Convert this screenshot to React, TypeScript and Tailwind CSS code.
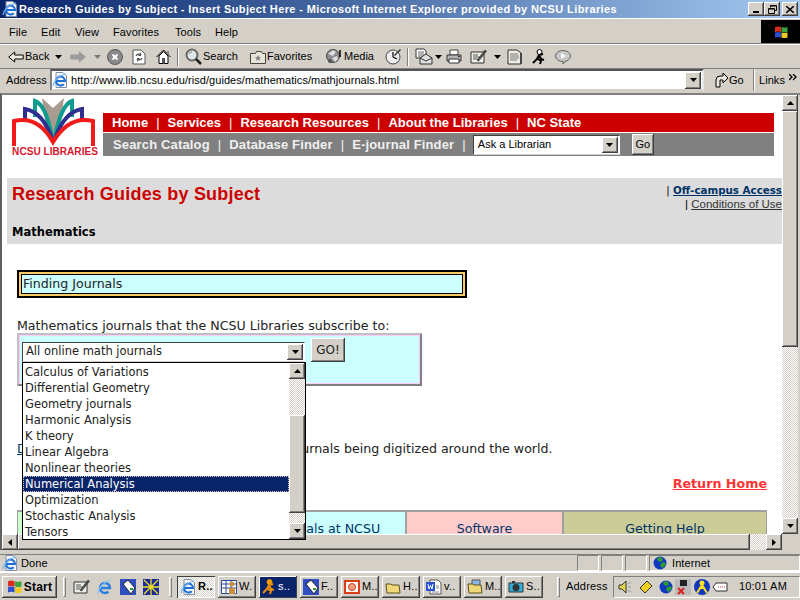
import type { ReactNode } from 'react';

const raised = 'bg-[#d4d0c8] shadow-[inset_-1px_-1px_0_#404040,inset_1px_1px_0_#ffffff,inset_-2px_-2px_0_#808080]';
const dither = 'bg-[repeating-conic-gradient(#d4d0c8_0_25%,#ffffff_0_50%)] bg-[length:2px_2px]';

function Arrow({ dir }: { dir: 'up' | 'down' | 'left' | 'right' }) {
  const pts = { up: '0,4 7,4 3.5,0', down: '0,0 7,0 3.5,4', left: '4,0 4,7 0,3.5', right: '0,0 0,7 4,3.5' }[dir];
  const vertical = dir === 'up' || dir === 'down';
  return (
    <svg width={vertical ? 7 : 4} height={vertical ? 4 : 7}>
      <polygon points={pts} fill="#000" />
    </svg>
  );
}

function ScrollBtn({ dir, className = '' }: { dir: 'up' | 'down' | 'left' | 'right'; className?: string }) {
  return (
    <div className={`${raised} flex shrink-0 items-center justify-center ${className}`}>
      <Arrow dir={dir} />
    </div>
  );
}

function Ico({ w = 16, h = 16, children }: { w?: number; h?: number; children: ReactNode }) {
  return (
    <svg width={w} height={h} viewBox={`0 0 ${w} ${h}`} className="shrink-0">
      {children}
    </svg>
  );
}

function IeIcon() {
  return (
    <Ico>
      <path d="M4 .5h7l3.500 3.500v11.500H4z" fill="#f4f4f4" stroke="#8090a8" />
      <path d="M4 9h9a4.500 4.500 0 1 0-1.300 3.200" fill="none" stroke="#1c6fd6" strokeWidth="2" />
      <path d="M1 14C2 8 8 3 14 2" fill="none" stroke="#70b4f0" strokeWidth="1.200" />
    </Ico>
  );
}

function BlueE() {
  return (
    <Ico>
      <path d="M3 9h10a5 5 0 1 0-1.500 3.600" fill="none" stroke="#2a7ee0" strokeWidth="2.500" />
      <path d="M1 15C1 9 7 3 14 1" fill="none" stroke="#8cc4f4" strokeWidth="1.200" />
    </Ico>
  );
}

function Globe() {
  return (
    <Ico w={14} h={14}>
      <circle cx="7" cy="7" r="6.500" fill="#1238c0" />
      <path d="M4 2l4-1 2 3-2 2-3-1zM7 8l4-2 2 2-3 4-2-1z" fill="#2f9c2f" />
    </Ico>
  );
}

function BackArrow({ gray = false, flip = false }: { gray?: boolean; flip?: boolean }) {
  return (
    <svg width="16" height="12" viewBox="0 0 16 12" className={flip ? '-scale-x-100' : ''}>
      <path d="M.7 6l6-5v3h8.500v4H6.700v3z" fill={gray ? '#9a9a9a' : '#e8e8e0'} stroke={gray ? '#9a9a9a' : '#000'} />
    </svg>
  );
}

function StopIcon() {
  return (
    <Ico>
      <circle cx="8" cy="8" r="7.500" fill="#8a8a8a" stroke="#5a5a5a" />
      <path d="M5.500 5.500l5 5M10.500 5.500l-5 5" stroke="#fff" strokeWidth="2" />
    </Ico>
  );
}

function RefreshIcon() {
  return (
    <Ico w={14}>
      <path d="M1 1h8l4 4v10H1z" fill="#fff" stroke="#555" />
      <path d="M4 7a3 3 0 0 1 5-1M10 9a3 3 0 0 1-5 1" fill="none" stroke="#555" strokeWidth="1.300" />
      <path d="M9 3v4H6zM5 13V9h3z" fill="#555" />
    </Ico>
  );
}

function HomeIcon() {
  return (
    <Ico w={15} h={15}>
      <path d="M3 7l4.500-4.500L12 7v7.500H3z" fill="#fff" stroke="#000" />
      <path d="M.5 8L7.500 1l7 7" fill="none" stroke="#000" />
      <path d="M6 9h3v5.500H6z" fill="#555" />
      <path d="M11 2h2v3h-2z" fill="#888" />
    </Ico>
  );
}

function SearchIcon() {
  return (
    <Ico w={17} h={17}>
      <circle cx="7" cy="7" r="5.500" fill="#dfe6e6" stroke="#666" strokeWidth="2" />
      <path d="M11 11l5 5" stroke="#222" strokeWidth="2.500" />
      <path d="M4 6a3 3 0 0 1 3-2" stroke="#888" fill="none" />
    </Ico>
  );
}

function FavoritesIcon() {
  return (
    <Ico h={14}>
      <path d="M.5 3.500h5l1-2h5l1 2h3v10H.5z" fill="#e8e4d8" stroke="#444" />
      <path d="M8 5l1 2 2 .3-1.500 1.500.4 2L8 9.800 6.100 10.800l.4-2L5 7.300 7 7z" fill="#888" />
    </Ico>
  );
}

function MediaIcon() {
  return (
    <Ico w={17} h={17}>
      <circle cx="7" cy="8" r="6.500" fill="#8c8c8c" stroke="#444" />
      <path d="M2 6l5-4 3 2-3 4zM6 10l5-2 1 3-3 3z" fill="#ddd" />
      <circle cx="4" cy="13" r="2" fill="#555" />
      <path d="M14 2v7" stroke="#000" strokeWidth="1.500" />
    </Ico>
  );
}

function HistoryIcon() {
  return (
    <Ico w={17} h={17}>
      <circle cx="8" cy="9" r="7" fill="#eee" stroke="#444" />
      <path d="M8 9V4M8 9l4 2" stroke="#000" strokeWidth="1.200" />
      <path d="M9 7l6-6 1 1-6 6z" fill="#333" />
    </Ico>
  );
}

function MailIcon() {
  return (
    <Ico w={18} h={17}>
      <path d="M1 1h8l2 2v7H1z" fill="#fff" stroke="#333" />
      <path d="M3 4h6M3 6h6M3 8h5" stroke="#666" />
      <path d="M5 10l6-4 6 4v6H5z" fill="#e0e0e0" stroke="#333" />
      <path d="M5 10l6 3 6-3" fill="none" stroke="#333" />
    </Ico>
  );
}

function PrintIcon() {
  return (
    <Ico h={15}>
      <path d="M4 1h8v5H4z" fill="#fff" stroke="#444" />
      <path d="M1 6h14v6H1z" fill="#b5b5b5" stroke="#333" />
      <path d="M3 10h10v4H3z" fill="#fff" stroke="#333" />
      <path d="M12 7h2v1h-2z" fill="#333" />
    </Ico>
  );
}

function EditIcon() {
  return (
    <Ico w={17} h={15}>
      <path d="M1 3h13v11H1z" fill="#efefe8" stroke="#333" />
      <path d="M3 6h5M3 8h6M3 10h4" stroke="#555" />
      <path d="M7 11l8-10 1.500 1.200-8 10z" fill="#555" stroke="#222" strokeWidth=".6" />
    </Ico>
  );
}

function DiscussIcon() {
  return (
    <Ico w={15}>
      <path d="M1 1h9l4 3v11H1z" fill="#ecebe4" stroke="#333" />
      <path d="M3 5h8M3 7h9M3 9h9M3 11h7" stroke="#777" />
      <path d="M14 4v11" stroke="#333" strokeWidth="1.500" />
    </Ico>
  );
}

function RunnerIcon({ color = '#fff', stroke = '#000' }: { color?: string; stroke?: string }) {
  return (
    <Ico w={14}>
      <circle cx="7.500" cy="3" r="2.500" fill={color} stroke={stroke} />
      <path d="M7 6l2 4 3 1M7 6l-2 4-4 4M6 10l3 2-1 3M7 6l4-1" fill="none" stroke={stroke} strokeWidth="2" />
    </Ico>
  );
}

function MessengerIcon() {
  return (
    <Ico h={14}>
      <ellipse cx="8" cy="6" rx="7.500" ry="5.500" fill="#c8c8c8" stroke="#666" />
      <path d="M6 3l5 3-5 3z" fill="#fff" />
      <path d="M8 11v3l3-3" fill="#c8c8c8" stroke="#666" />
    </Ico>
  );
}

function GoIcon() {
  return (
    <Ico w={15}>
      <path d="M2 15V8a4 4 0 0 1 4-4h3V1l5 5-5 5V8H6v7z" fill="#e8e8e0" stroke="#000" />
    </Ico>
  );
}

function WinFlag({ size = 14 }: { size?: number }) {
  return (
    <svg width={size} height={size} viewBox="0 0 14 14" className="shrink-0">
      <path d="M1 2q3-1 6 0v5q-3-1-6 0z" fill="#d62b1f" />
      <path d="M7.500 2q3 1 6 0v5q-3 1-6 0z" fill="#3ba33b" />
      <path d="M1 7.500q3-1 6 0v5q-3-1-6 0z" fill="#2a4fd0" />
      <path d="M7.500 7.500q3 1 6 0v5q-3 1-6 0z" fill="#f0c81e" />
    </svg>
  );
}

function TagIcon() {
  return (
    <Ico>
      <path d="M0 0h16v16H0z" fill="#1238c0" opacity=".85" />
      <path d="M3 5l5-4 7 8-4 6z" fill="#fff" stroke="#222" />
      <path d="M10 9h3v2h-3z" fill="#2f9c2f" />
    </Ico>
  );
}

function StarGridIcon() {
  return (
    <Ico>
      <path d="M0 0h16v16H0z" fill="#1a2a9a" />
      <path d="M1 1l14 14M15 1L1 15M8 0v16M0 8h16" stroke="#f0e020" strokeWidth="1.300" />
    </Ico>
  );
}

function SheetPersonIcon() {
  return (
    <Ico>
      <path d="M.5 1.500h15v13H.5z" fill="#fff" stroke="#2a4a9a" />
      <path d="M.5 5h15M.5 9h15M5 1.500v13M10 1.500v13" stroke="#2a4a9a" />
      <circle cx="11" cy="5" r="2.500" fill="#c89040" />
      <path d="M8 15V9h6v6z" fill="#c89040" />
    </Ico>
  );
}

function SlideIcon() {
  return (
    <Ico>
      <path d="M0 1h16v14H0z" fill="#d8401a" />
      <path d="M2 3h12v10H2z" fill="#fff" />
      <circle cx="8" cy="8" r="3.500" fill="#f0a080" stroke="#d8401a" />
    </Ico>
  );
}

function FolderIcon({ paper = false }: { paper?: boolean }) {
  return (
    <Ico>
      {paper && <path d="M5 1h8v8H5z" fill="#8cb8e8" stroke="#555" />}
      <path d="M1 5h5l1 1h7l1 8H2z" fill="#f0d878" stroke="#5a5020" />
    </Ico>
  );
}

function WordIcon() {
  return (
    <Ico>
      <path d="M4 1h8l3 3v11H4z" fill="#fff" stroke="#555" />
      <path d="M0 3h9v9H0z" fill="#2a4fd0" />
      <path d="M2 5l1 5 1.500-3.500L6 10l1-5" fill="none" stroke="#fff" />
      <path d="M10 7h3M10 9h3M6 13h7" stroke="#888" />
    </Ico>
  );
}

function CameraIcon() {
  return (
    <Ico>
      <path d="M1 4h14v9H1z" fill="#30b0d8" stroke="#333" />
      <circle cx="8" cy="8.500" r="3.500" fill="#333" />
      <path d="M4 2h3v2H4z" fill="#333" />
    </Ico>
  );
}

function Logo() {
  return (
    <div className="flex w-[86px] shrink-0 flex-col items-center">
      <svg width="86" height="49" viewBox="0 0 86 49">
        <path d="M30 1L41 11 52 1 48 30 41 45 34 30z" fill="#a89c90" />
        <path d="M23 20V4Q34 8 40 40" fill="none" stroke="#0f9b8e" strokeWidth="4" />
        <path d="M60 20V4Q49 8 43 40" fill="none" stroke="#0f9b8e" strokeWidth="4" />
        <path d="M13 24V12Q31 15 40 42" fill="none" stroke="#2f2f8f" strokeWidth="4" />
        <path d="M70 24V12Q52 15 43 42" fill="none" stroke="#2f2f8f" strokeWidth="4" />
        <path d="M2 49V24Q26 18 41 45Q57 18 81 24V49" fill="none" stroke="#f01c1c" strokeWidth="4" />
      </svg>
      <div className="mt-[1px] text-[10.100px] leading-[10px] font-bold whitespace-nowrap text-[#d8172c]">NCSU LIBRARIES</div>
    </div>
  );
}

const menus = [
  ['File', 'w-[32px]'],
  ['Edit', 'w-[34px]'],
  ['View', 'w-[38px]'],
  ['Favorites', 'w-[62px]'],
  ['Tools', 'w-[40px]'],
  ['Help', 'w-[40px]'],
];

const listItems = ['Calculus of Variations', 'Differential Geometry', 'Geometry journals', 'Harmonic Analysis', 'K theory', 'Linear Algebra', 'Nonlinear theories', 'Numerical Analysis', 'Optimization', 'Stochastic Analysis', 'Tensors'];

function NavSep() {
  return <span className="px-[8px] font-normal">|</span>;
}

function Dropdown() {
  return (
    <div className="absolute top-[267px] left-[20px] z-10 flex h-[178px] w-[284px] border border-black bg-white font-['DejaVu_Sans',sans-serif]">
      <div className="flex-1 pt-[1px]">
        {listItems.map((item) => (
          <div
            key={item}
            className={`h-[16px] pl-[2px] text-[11.500px] leading-[16px] whitespace-nowrap ${item === 'Numerical Analysis' ? 'bg-[#0a246a] text-white outline-1 -outline-offset-1 outline-[#d4d0c8] outline-dotted' : 'text-[#222222]'}`}
          >
            {item}
          </div>
        ))}
      </div>
      <div className="flex w-[16px] flex-col">
        <ScrollBtn dir="up" className="h-[16px]" />
        <div className={`h-[36px] ${dither}`} />
        <div className={`h-[98px] ${raised}`} />
        <div className={`flex-1 ${dither}`} />
        <ScrollBtn dir="down" className="h-[16px]" />
      </div>
    </div>
  );
}

function PageBody() {
  return (
    <div className="h-[439px] overflow-hidden bg-white font-['DejaVu_Sans',sans-serif]">
      <div className="flex pt-[2px] pl-[10px] font-['Liberation_Sans',sans-serif]">
        <Logo />
        <div className="mt-[16px] ml-[5px] w-[671px]">
          <div className="flex h-[19px] items-center bg-[#cc0000] pt-[1px] pl-[9px] text-[13px] font-bold whitespace-nowrap text-white">
            Home<NavSep />Services<NavSep />Research Resources<NavSep />About the Libraries<NavSep />NC State
          </div>
          <div className="mt-[1px] flex h-[23px] items-center bg-[#808080] pl-[10px] text-[13px] font-bold tracking-[0.15px] whitespace-nowrap text-[#f0f0f0]">
            <span className="pt-[1px]">Search Catalog</span><NavSep /><span className="pt-[1px]">Database Finder</span><NavSep /><span className="pt-[1px]">E-journal Finder</span><NavSep />
            <div className="ml-[-1px] flex h-[20px] w-[147px] items-center justify-between border border-t-[#404040] border-r-white border-b-[#d4d0c8] border-l-[#404040] bg-white pr-[1px] pl-[4px] text-[11px] font-normal tracking-normal text-black">
              Ask a Librarian
              <ScrollBtn dir="down" className="h-[16px] w-[16px]" />
            </div>
            <div className={`ml-[12px] flex h-[21px] w-[22px] items-center justify-center text-[11px] font-normal tracking-normal text-black ${raised}`}>Go</div>
          </div>
        </div>
      </div>

      <div className="mt-[21px] ml-[5px] flex h-[66px] justify-between bg-[#dcdcdc]">
        <div className="pt-[5px] pl-[5px] font-['Liberation_Sans',sans-serif]">
          <div className="text-[18px] leading-[22px] font-bold tracking-[0.2px] text-[#cc0000]">Research Guides by Subject</div>
          <div className="mt-[19px] font-['DejaVu_Sans',sans-serif] text-[11.500px] leading-[16px] font-bold text-black">Mathematics</div>
        </div>
        <div className="pt-[5px] text-right leading-[14px] whitespace-nowrap text-[#333333]">
          <div className="text-[10.300px]">
            <span className="text-black">| </span>
            <span className="font-bold text-[#003366] underline">Off-campus Access</span>
          </div>
          <div className="font-['Liberation_Sans',sans-serif] text-[11.500px]">
            <span className="text-black">| </span>
            <span className="underline">Conditions of Use</span>
          </div>
        </div>
      </div>

      <div className="mt-[26px] ml-[15px] w-[450px] border-2 border-black">
        <div className="border-2 border-[#ffcc66]">
          <div className="h-[20px] border border-black bg-[#ccffff] pl-[1px] text-[12.600px] leading-[18px] text-[#222222]">Finding Journals</div>
        </div>
      </div>

      <div className="mt-[20px] ml-[15px] text-[12.600px] leading-[16px] whitespace-nowrap text-[#222222]">Mathematics journals that the NCSU Libraries subscribe to:</div>

      <div className="mt-[-1px] ml-[15px] h-[53px] w-[405px] border-2 border-t-[#c0c0c0] border-r-[#808080] border-b-[#808080] border-l-[#c0c0c0]">
        <div className="flex h-full gap-[6px] border border-[#ffccff] bg-[#ccffff] pt-[2px] pl-[2px]">
          <div className="mt-[4px] flex h-[20px] w-[283px] items-center justify-between border border-t-[#404040] border-r-white border-b-[#d4d0c8] border-l-[#404040] bg-white pr-[1px] pl-[3px] text-[11.500px] text-[#222222]">
            All online math journals
            <ScrollBtn dir="down" className="h-[16px] w-[16px]" />
          </div>
          <div className={`flex h-[24px] w-[34px] items-center justify-center text-[12px] text-[#222222] ${raised}`}>GO!</div>
        </div>
      </div>

      <div className="mt-[55px] ml-[15px] flex text-[12.600px] leading-[16px] whitespace-nowrap text-[#222222]">
        <span className="w-[273px] text-[#003366] underline">D</span>
        <span>journals being digitized around the world.</span>
      </div>

      <div className="mt-[19px] mr-[15px] text-right text-[12.700px] leading-[16px] font-bold text-[#ff3333] underline">Return Home</div>

      <div className="mt-[18px] ml-[15px] flex h-[30px] w-[750px] border-t-2 border-r border-l border-[#a0a0a0] text-[12.600px] text-[#003366]">
        <div className="w-[231px] border-r border-[#a0a0a0] bg-[#ccffcc]" />
        <div className="w-[158px] border-r-2 border-[#a0a0a0] bg-[#ccffff] pt-[9px] text-center leading-[16px] whitespace-nowrap">Journals at NCSU</div>
        <div className="w-[157px] border-r-2 border-[#a0a0a0] bg-[#ffcccc] pt-[9px] text-center leading-[16px]">Software</div>
        <div className="flex-1 bg-[#cccc99] pt-[9px] text-center leading-[16px]">Getting Help</div>
      </div>
    </div>
  );
}

function Divider({ className = '' }: { className?: string }) {
  return <div className={`w-[2px] border-r border-l border-r-white border-l-[#808080] ${className}`} />;
}

function Browser() {
  return (
    <>
      <div className="flex h-[18px] items-center bg-gradient-to-r from-[#0a246a] to-[#a6caf0] pl-[2px]">
        <IeIcon />
        <div className="ml-[1px] flex-1 text-[11px] font-bold tracking-[0.38px] whitespace-nowrap text-white">Research Guides by Subject - Insert Subject Here - Microsoft Internet Explorer provided by NCSU Libraries</div>
        <div className="flex pr-[2px]">
          <div className={`flex h-[14px] w-[16px] items-end justify-center pb-[3px] ${raised}`}><div className="h-[2px] w-[6px] bg-black" /></div>
          <div className={`flex h-[14px] w-[16px] items-center justify-center ${raised}`}>
            <svg width="9" height="9"><path d="M2.500 2.500V.5h6v5h-2M.5 3.500h6v5h-6z" fill="none" stroke="#000" /><path d="M3 1h5M1 4h5" stroke="#000" /></svg>
          </div>
          <div className={`ml-[2px] flex h-[14px] w-[16px] items-center justify-center ${raised}`}>
            <svg width="8" height="7"><path d="M0 0l8 7M8 0L0 7" stroke="#000" strokeWidth="1.500" /></svg>
          </div>
        </div>
      </div>

      <div className="flex h-[26px] items-stretch border-t border-t-white border-b border-b-[#808080] pl-[9px]">
        <div className="flex flex-1 items-center pt-[2px] text-[11px] tracking-[0.1px] text-black">
          {menus.map(([label, width]) => (
            <span key={label} className={width}>{label}</span>
          ))}
        </div>
        <div className="mt-[1px] flex w-[39px] items-center justify-center bg-black">
          <WinFlag size={14} />
        </div>
      </div>

      <div className="flex h-[25px] items-center border-t border-t-white border-b border-b-[#808080] pl-[8px] text-[11px] text-black">
        <BackArrow />
        <span className="ml-[1px] w-[30px]">Back</span>
        <Arrow dir="down" />
        <div className="ml-[8px]"><BackArrow gray flip /></div>
        <div className="ml-[8px] opacity-40"><Arrow dir="down" /></div>
        <div className="ml-[6px]"><StopIcon /></div>
        <div className="ml-[9px]"><RefreshIcon /></div>
        <div className="ml-[10px]"><HomeIcon /></div>
        <Divider className="ml-[6px] h-[18px]" />
        <div className="ml-[6px]"><SearchIcon /></div>
        <span className="ml-[1px] w-[47px]">Search</span>
        <FavoritesIcon />
        <span className="ml-[1px] w-[59px]">Favorites</span>
        <MediaIcon />
        <span className="ml-[1px] w-[41px]">Media</span>
        <HistoryIcon />
        <Divider className="ml-[5px] h-[18px]" />
        <div className="ml-[6px]"><MailIcon /></div>
        <div className="ml-[2px]"><Arrow dir="down" /></div>
        <div className="ml-[4px]"><PrintIcon /></div>
        <div className="ml-[8px]"><EditIcon /></div>
        <div className="ml-[7px]"><Arrow dir="down" /></div>
        <div className="ml-[6px]"><DiscussIcon /></div>
        <div className="ml-[10px]"><RunnerIcon /></div>
        <div className="ml-[9px]"><MessengerIcon /></div>
      </div>

      <div className="flex h-[24px] items-center pb-[2px] pl-[6px] text-[11px] tracking-[0.06px] text-black">
        <span className="w-[44px]">Address</span>
        <div className="flex h-[22px] w-[654px] items-center border-2 border-t-[#555555] border-r-[#e8e8e8] border-b-[#d4d0c8] border-l-[#808080] bg-white pr-[1px]">
          <IeIcon />
          <span className="ml-[3px] flex-1 whitespace-nowrap">http://www.lib.ncsu.edu/risd/guides/mathematics/mathjournals.html</span>
          <ScrollBtn dir="down" className="h-[17px] w-[16px]" />
        </div>
        <div className="ml-[10px]"><GoIcon /></div>
        <span className="w-[24px]">Go</span>
        <Divider className="h-[22px]" />
        <span className="ml-[4px] w-[30px]">Links</span>
        <svg width="8" height="7" className="mb-[6px]"><path d="M0 0l3 3-3 3M4 0l3 3-3 3" fill="none" stroke="#000" strokeWidth="1.300" /></svg>
      </div>

      <div className="flex h-[457px] border-t-2 border-l-2 border-t-[#808080] border-l-[#606060] pr-[2px]">
        <div className="relative flex w-[780px] flex-col">
          <PageBody />
          <div className="flex h-[16px]">
            <ScrollBtn dir="left" className="w-[16px]" />
            <div className={`flex-1 ${raised}`} />
            <div className={`w-[16px] ${dither}`} />
            <ScrollBtn dir="right" className="w-[16px]" />
          </div>
          <Dropdown />
        </div>
        <div className="flex w-[16px] flex-col">
          <ScrollBtn dir="up" className="h-[16px]" />
          <div className={`h-[236px] ${raised}`} />
          <div className={`flex-1 ${dither}`} />
          <ScrollBtn dir="down" className="h-[16px]" />
          <div className="h-[16px]" />
        </div>
      </div>
    </>
  );
}

function StatusBar() {
  return (
    <div className="h-[23px] pt-[4px]">
      <div className="flex h-[19px] items-center border-t border-t-[#808080] border-b-2 border-b-white pl-[2px] text-[11px] tracking-[0.1px] text-black">
        <IeIcon />
        <span className="ml-[3px] w-[556px]">Done</span>
        {[0, 1, 2].map((i) => (
          <div key={i} className="mr-[2px] h-[16px] w-[22px] border border-t-[#808080] border-r-white border-b-white border-l-[#808080]" />
        ))}
        <div className="flex h-[16px] flex-1 items-center border border-t-[#808080] border-r-white border-b-white border-l-[#808080] pl-[3px]">
          <Globe />
          <span className="ml-[5px]">Internet</span>
        </div>
      </div>
    </div>
  );
}

const tasks: { label: string; icon: ReactNode; active?: boolean; navy?: boolean }[] = [
  { label: 'R..', icon: <IeIcon />, active: true },
  { label: 'W.', icon: <SheetPersonIcon /> },
  { label: 's..', icon: <RunnerIcon color="#f0a000" stroke="#f09000" />, navy: true },
  { label: 'F..', icon: <TagIcon /> },
  { label: 'M..', icon: <SlideIcon /> },
  { label: 'H..', icon: <FolderIcon /> },
  { label: 'v..', icon: <WordIcon /> },
  { label: 'M..', icon: <FolderIcon paper /> },
  { label: 'S..', icon: <CameraIcon /> },
];

function Handle({ className = '' }: { className?: string }) {
  return <div className={`h-[20px] w-[3px] border border-t-white border-r-[#808080] border-b-[#808080] border-l-white ${className}`} />;
}

function Taskbar() {
  return (
    <div className="flex h-[27px] items-center pl-[2px] text-[11px] tracking-[0.2px] text-black">
      <div className={`flex h-[22px] w-[55px] items-center justify-center gap-[2px] text-[12px] font-bold ${raised}`}>
        <WinFlag size={15} />
        Start
      </div>
      <Handle className="ml-[6px]" />
      <div className="ml-[7px] flex w-[96px] items-center gap-[7px]">
        <EditIcon />
        <BlueE />
        <TagIcon />
        <StarGridIcon />
      </div>
      <Handle />
      <div className="ml-[5px] flex gap-[3px]">
        {tasks.map((t, i) => (
          <div
            key={i}
            className={`flex h-[22px] w-[38px] items-center gap-[2px] pl-[3px] whitespace-nowrap ${
              t.active
                ? `font-bold shadow-[inset_1px_1px_0_#404040,inset_-1px_-1px_0_#ffffff] ${dither}`
                : t.navy
                  ? 'bg-[#0a246a] text-white shadow-[inset_-1px_-1px_0_#404040,inset_1px_1px_0_#ffffff]'
                  : raised
            }`}
          >
            {t.icon}
            {t.label}
          </div>
        ))}
      </div>
      <Handle className="ml-[14px]" />
      <span className="ml-[6px] w-[47px]">Address</span>
      <div className="flex h-[22px] flex-1 items-center gap-[2px] border border-t-[#808080] border-r-white border-b-white border-l-[#808080] pl-[4px]">
        <Ico w={14} h={14}><path d="M1 5h3l4-4v12l-4-4H1z" fill="#e8d850" stroke="#333" /><path d="M10 4l3-2M10 7h3M10 10l3 2" stroke="#999" /></Ico>
        <div className="w-[3px]" />
        <Ico w={14} h={14}><path d="M1 8l7-7 5 5-7 7z" fill="#f0d020" stroke="#333" /></Ico>
        <div className="w-[2px]" />
        <Globe />
        <Ico><path d="M0 0h16v16H0z" fill="#bbb" /><path d="M5 1h7v6H5z" fill="#222" /><path d="M3 9l6 6M9 9l-6 6" stroke="#e02020" strokeWidth="2" /></Ico>
        <div className="ml-[1px]">
          <Ico><circle cx="8" cy="8" r="8" fill="#1238c0" /><circle cx="8" cy="4" r="2.500" fill="#ffe020" /><path d="M8 6L3 14M8 6l5 8M5 9h6" stroke="#ffe020" strokeWidth="2" /></Ico>
        </div>
        <Ico h={10}><path d="M4 1h11v8H4L1 5z" fill="#fff" stroke="#333" /><path d="M6 5h7" stroke="#d03030" strokeDasharray="1 1" /></Ico>
        <span className="ml-auto pr-[12px]">10:01 AM</span>
      </div>
    </div>
  );
}

export default function App() {
  return (
    <div className="flex h-[600px] w-[800px] flex-col overflow-hidden bg-[#d4d0c8] font-['Liberation_Sans',sans-serif]">
      <Browser />
      <StatusBar />
      <Taskbar />
    </div>
  );
}
